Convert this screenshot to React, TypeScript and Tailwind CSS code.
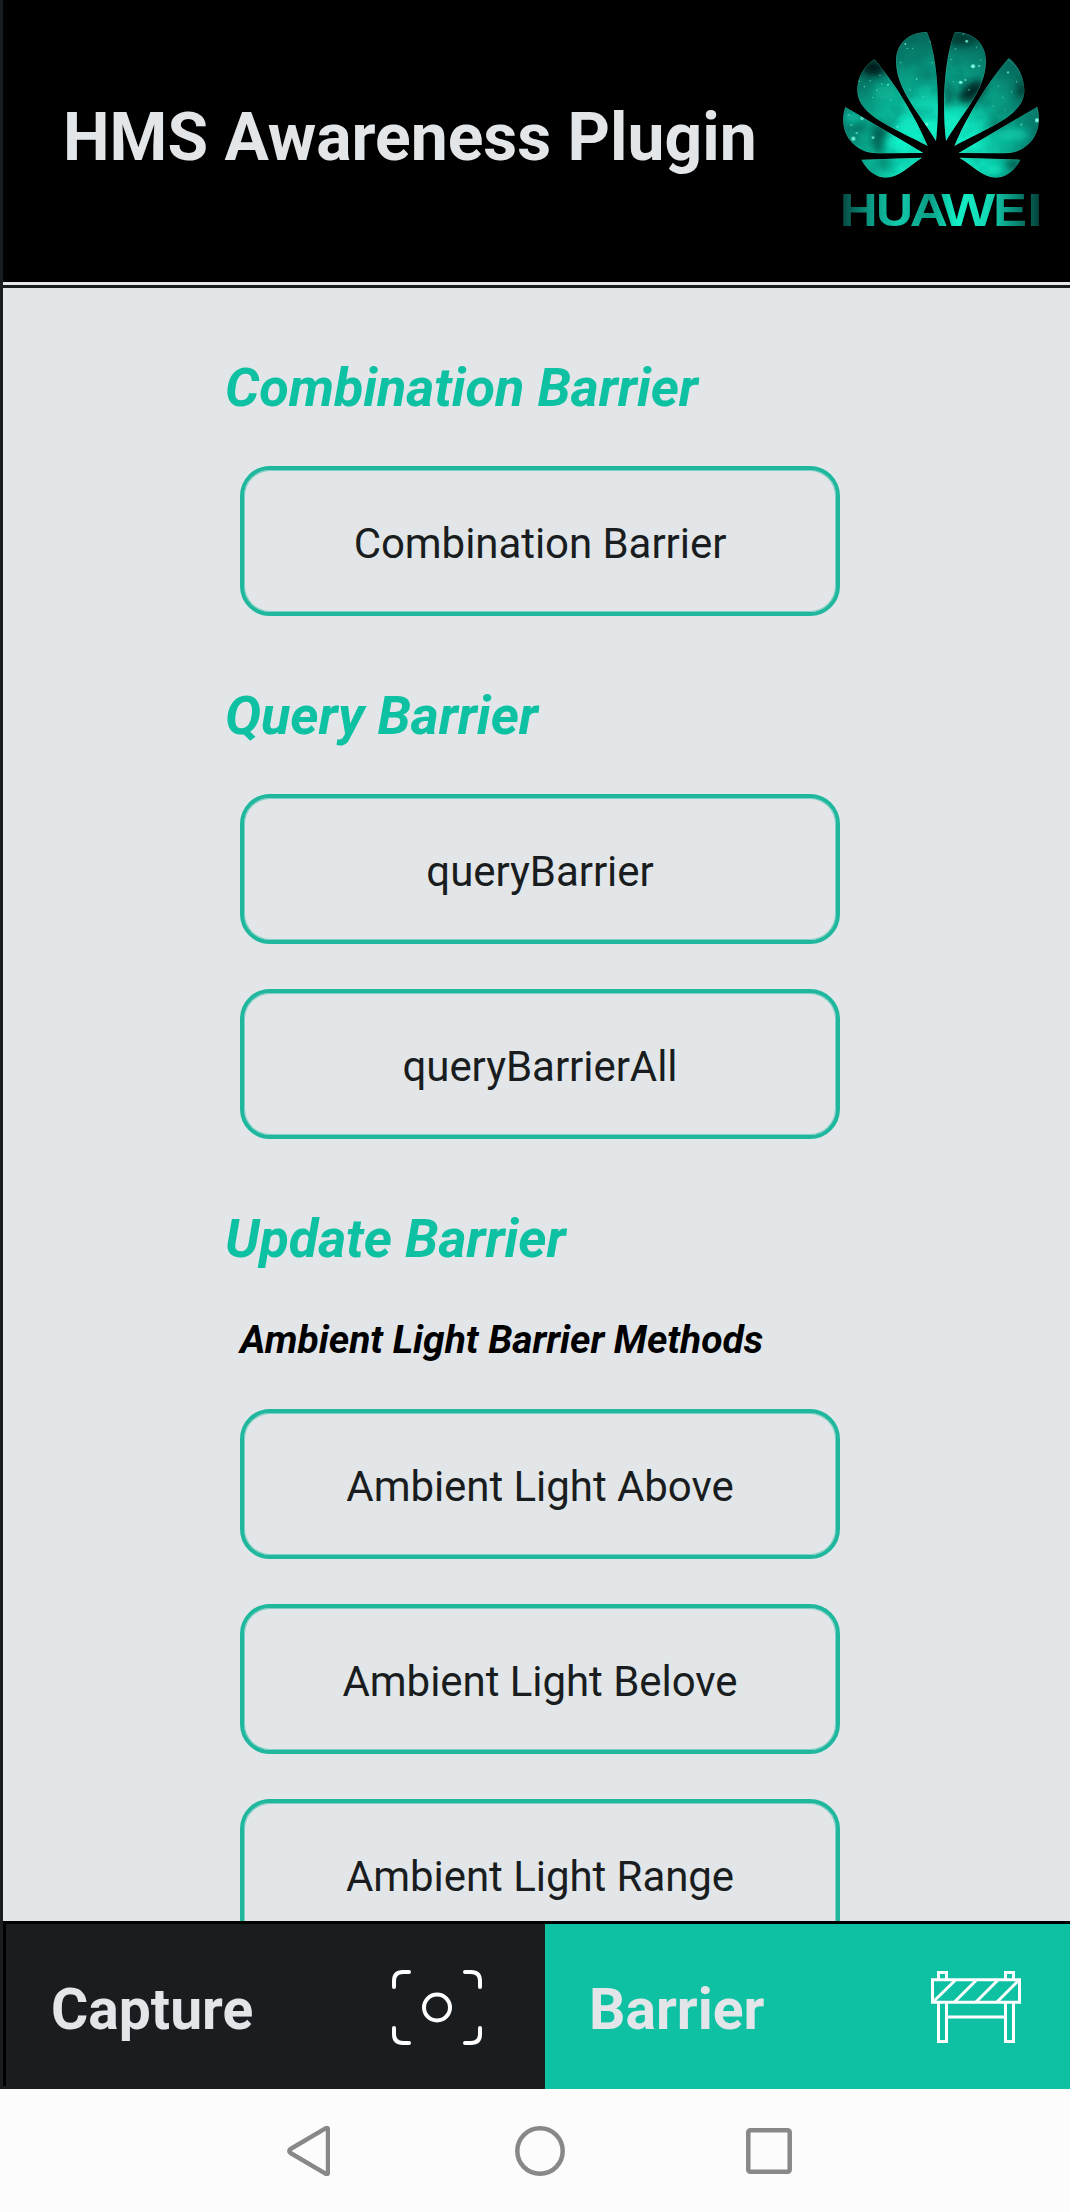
import React from "react";

const STARS: [number, number, number, number][] = [
  [459, 169, 6, 1], [422, 217, 5, 1], [477, 168, 3, 0.9], [440, 94, 4, 0.9], [436, 210, 3, 0.8],
  [100, 386, 6, 0.9], [126, 325, 5, 0.8], [320, 343, 5, 0.8], [159, 383, 4, 0.8], [110, 369, 3, 0.8],
  [651, 331, 6, 1], [564, 187, 3, 0.9], [332, 94, 3, 0.9], [256, 102, 3, 0.7], [262, 115, 2, 0.7],
  [290, 207, 2.5, 0.8], [242, 158, 2, 0.7], [278, 115, 2, 0.6], [336, 158, 2, 0.7], [204, 224, 3, 0.8],
  [180, 196, 2, 0.7], [150, 212, 2, 0.7], [133, 230, 2, 0.8], [118, 214, 2, 0.7], [170, 240, 2, 0.6],
  [158, 262, 2, 0.6], [232, 350, 3, 0.7], [406, 117, 2, 0.8], [393, 148, 2, 0.7], [470, 112, 2, 0.6],
  [482, 150, 2, 0.7], [447, 240, 2, 0.8], [470, 262, 2, 0.7], [400, 215, 2, 0.6], [535, 228, 2, 0.7],
  [548, 262, 2, 0.7], [590, 215, 2, 0.7], [575, 245, 2, 0.6], [520, 288, 2, 0.7], [556, 300, 2, 0.6],
  [604, 343, 3, 0.6], [546, 343, 3, 0.6], [86, 315, 2.5, 0.8], [94, 345, 2.5, 0.8], [310, 260, 2, 0.6],
  [270, 240, 2, 0.6], [430, 72, 2, 0.7], [212, 270, 2, 0.6], [185, 222, 2, 0.7],
];

function HuaweiLogo() {
  const petals = (
    <>
      <path d="M348 393C361 280 352 135 321 66C272 66 229 95 228 152C228 240 300 310 348 393Z" />
      <path d="M323 408C285 318 222 215 163 148C126 172 110 210 112 246C118 318 215 350 323 408Z" />
      <path d="M309 428L76 291C62 332 71 372 97 399C125 427 150 430 185 430L309 429Z" />
      <path d="M306 443L124 449C141 481 167 503 200 503C237 502 270 466 306 443Z" />
    </>
  );
  return (
    <svg viewBox="0 0 750 816" className="h-[272px] w-[250px] shrink-0" role="img" aria-label="Huawei">
      <defs>
        <clipPath id="petals">
          <path d="M348 393C361 280 352 135 321 66C272 66 229 95 228 152C228 240 300 310 348 393Z" />
          <path d="M323 408C285 318 222 215 163 148C126 172 110 210 112 246C118 318 215 350 323 408Z" />
          <path d="M309 428L76 291C62 332 71 372 97 399C125 427 150 430 185 430L309 429Z" />
          <path d="M306 443L124 449C141 481 167 503 200 503C237 502 270 466 306 443Z" />
          <path d="M378 393C365 280 374 135 405 66C454 66 497 95 498 152C498 240 426 310 378 393Z" />
          <path d="M403 408C441 318 504 215 567 143C600 172 614 210 613 246C608 318 511 350 403 408Z" />
          <path d="M417 428L652 290C663 332 655 372 629 399C601 427 576 430 541 430L417 429Z" />
          <path d="M418 443L601 449C585 481 559 503 526 503C489 502 456 466 418 443Z" />
        </clipPath>
        <radialGradient id="nebula" gradientUnits="userSpaceOnUse" cx="350" cy="430" r="390">
          <stop offset="0" stopColor="#10f8cf" />
          <stop offset="0.3" stopColor="#10e8c1" />
          <stop offset="0.5" stopColor="#0ab597" />
          <stop offset="0.75" stopColor="#088774" />
          <stop offset="1" stopColor="#055e53" />
        </radialGradient>
        <linearGradient id="word" gradientUnits="userSpaceOnUse" x1="70" y1="0" x2="657" y2="0">
          <stop offset="0" stopColor="#064c44" />
          <stop offset="0.14" stopColor="#0a9a84" />
          <stop offset="0.28" stopColor="#13cbab" />
          <stop offset="0.44" stopColor="#0a9b84" />
          <stop offset="0.58" stopColor="#12f0c6" />
          <stop offset="0.74" stopColor="#14d8b5" />
          <stop offset="0.88" stopColor="#0a8876" />
          <stop offset="1" stopColor="#03443c" />
        </linearGradient>
        <filter id="soft" x="-50%" y="-50%" width="200%" height="200%">
          <feGaussianBlur stdDeviation="13" />
        </filter>
        <filter id="clouds" x="0" y="0" width="100%" height="100%">
          <feTurbulence type="fractalNoise" baseFrequency="0.012" numOctaves="4" seed="8" />
          <feColorMatrix values="0 0 0 0 0  0 0 0 0 0.12  0 0 0 0 0.1  2.6 0 0 0 -1.15" />
        </filter>
      </defs>
      <g clipPath="url(#petals)">
        <rect x="60" y="50" width="610" height="460" fill="url(#nebula)" />
        <rect x="60" y="50" width="610" height="460" filter="url(#clouds)" opacity="0.4" />
        <g filter="url(#soft)">
          <ellipse cx="160" cy="172" rx="40" ry="24" fill="#011512" />
          <ellipse cx="180" cy="385" rx="26" ry="45" fill="#034038" opacity="0.75" />
          <ellipse cx="115" cy="350" rx="28" ry="16" fill="#055a4e" opacity="0.7" />
          <ellipse cx="455" cy="245" rx="48" ry="24" fill="#011a17" opacity="0.9" transform="rotate(-35 455 245)" />
          <ellipse cx="425" cy="85" rx="50" ry="22" fill="#02352f" opacity="0.9" />
          <ellipse cx="385" cy="255" rx="12" ry="40" fill="#022b26" opacity="0.7" />
          <ellipse cx="605" cy="240" rx="15" ry="25" fill="#022b26" opacity="0.9" />
          <ellipse cx="540" cy="345" rx="30" ry="9" fill="#034b41" opacity="0.8" />
          <ellipse cx="580" cy="465" rx="24" ry="12" fill="#02352f" opacity="0.9" />
          <ellipse cx="195" cy="460" rx="16" ry="12" fill="#044d43" opacity="0.8" />
          <ellipse cx="580" cy="375" rx="50" ry="17" fill="#0ed6b1" opacity="0.8" />
          <ellipse cx="410" cy="345" rx="40" ry="28" fill="#10e9c1" opacity="0.7" />
          <ellipse cx="240" cy="400" rx="45" ry="22" fill="#10f2c9" opacity="0.9" />
          <ellipse cx="270" cy="345" rx="34" ry="18" fill="#10e6bf" opacity="0.8" />
          <ellipse cx="195" cy="250" rx="34" ry="22" fill="#0cb899" opacity="0.7" />
          <ellipse cx="98" cy="322" rx="26" ry="12" fill="#12d9b5" opacity="0.8" />
          <ellipse cx="520" cy="480" rx="30" ry="14" fill="#10f1c8" opacity="0.8" />
          <ellipse cx="255" cy="470" rx="30" ry="16" fill="#10f1c8" opacity="0.8" />
        </g>
        {STARS.map(([x, y, r, o]) => (
          <circle key={`${x}-${y}`} cx={x} cy={y} r={r} fill="#7dfbe3" opacity={o} />
        ))}
        <g fill="none" stroke="#8edccb" strokeOpacity="0.25" strokeWidth="3">
          {petals}
          <g transform="translate(726 0) scale(-1 1)">{petals}</g>
        </g>
      </g>
      <text y="648" fontFamily="Liberation Sans, sans-serif" fontWeight="700" fontSize="137" fill="url(#word)">
        <tspan x="59" textLength="114" lengthAdjust="spacingAndGlyphs">H</tspan>
        <tspan x="168" textLength="111" lengthAdjust="spacingAndGlyphs">U</tspan>
        <tspan x="269" textLength="115" lengthAdjust="spacingAndGlyphs">A</tspan>
        <tspan x="364" textLength="162" lengthAdjust="spacingAndGlyphs">W</tspan>
        <tspan x="520" textLength="101" lengthAdjust="spacingAndGlyphs">E</tspan>
        <tspan x="622" textLength="46" lengthAdjust="spacingAndGlyphs">I</tspan>
      </text>
    </svg>
  );
}

function CaptureIcon() {
  return (
    <svg viewBox="0 0 90 75" className="h-[75px] w-[90px]" fill="none" stroke="#fff" strokeWidth="4" strokeLinecap="round">
      <path d="M2 17V11Q2 2 11 2H17M73 2H79Q88 2 88 11V17M88 58V64Q88 73 79 73H73M17 73H11Q2 73 2 64V58" />
      <circle cx="45" cy="37.5" r="13" />
    </svg>
  );
}

function BarrierIcon() {
  return (
    <svg viewBox="0 0 90 73" className="h-[73px] w-[90px]" fill="none" stroke="#fff" strokeWidth="3">
      <path d="M1.5 8.8H88.5V31.2H1.5ZM7.5 8V1.5H15.5V8M74.5 8V1.5H82.5V8M7.5 32V70.5H15.5V32M74.5 32V70.5H82.5V32M15.5 46H74.5" />
      <path d="M2.5 30.5L24.5 9M23.5 31L45.5 9M45 31L67 9M66 31L88 9" />
    </svg>
  );
}

function Heading({ children }: { children: React.ReactNode }) {
  return (
    <h2 className="ml-[222px] flex h-[72px] items-center whitespace-nowrap pt-[2px] text-[54px] font-bold italic leading-[72px] tracking-[-0.1px] text-[#0ec1a3]">
      {children}
    </h2>
  );
}

function ActionButton({ children }: { children: React.ReactNode }) {
  return (
    <button className="flex h-[150px] w-[600px] shrink-0 items-center justify-center rounded-[30px] border-4 border-[#1fb89f] pt-1 text-[42px] tracking-[-0.05px] text-[#1a1d20] shadow-[inset_0_0_0_1px_#1fb89f80]">
      {children}
    </button>
  );
}

export default function App() {
  return (
    <div className="flex h-[2212px] w-[1070px] flex-col overflow-hidden bg-[#1a1d20] font-['Roboto',sans-serif]">
      <div className="flex h-[2089px] flex-col pl-[3px]">
        <header className="flex h-[285px] shrink-0 items-start justify-between border-b-[3px] border-[#e8e6ea] bg-black pt-[10px]">
          <h1 className="ml-[60px] mt-[88px] whitespace-nowrap text-[66px] font-bold leading-[80px] text-[#e2e6e9]">
            HMS Awareness Plugin
          </h1>
          <HuaweiLogo />
        </header>

        <main className="mt-[3px] flex h-[1633px] shrink-0 flex-col overflow-hidden bg-[#e2e6e9]">
          <div className="flex flex-col pt-[63px]">
            <Heading>Combination Barrier</Heading>
            <div className="ml-[237px] mt-[43px] flex flex-col">
              <ActionButton>Combination Barrier</ActionButton>
            </div>
            <div className="mt-[63px]">
              <Heading>Query Barrier</Heading>
            </div>
            <div className="ml-[237px] mt-[43px] flex flex-col gap-[45px]">
              <ActionButton>queryBarrier</ActionButton>
              <ActionButton>queryBarrierAll</ActionButton>
            </div>
            <div className="mt-[63px]">
              <Heading>Update Barrier</Heading>
            </div>
            <h3 className="ml-[237px] mt-[40px] h-[52px] whitespace-nowrap text-[39px] font-bold italic leading-[52px] tracking-[-0.03px] text-black">
              Ambient Light Barrier Methods
            </h3>
            <div className="ml-[237px] mt-[43px] flex flex-col gap-[45px]">
              <ActionButton>Ambient Light Above</ActionButton>
              <ActionButton>Ambient Light Belove</ActionButton>
              <ActionButton>Ambient Light Range</ActionButton>
            </div>
          </div>
        </main>

        <footer className="flex h-[168px] shrink-0 border-t-[3px] border-black">
          <div className="flex w-[542px] flex-col">
            <div className="flex h-[162px] items-center justify-between border-l-[3px] border-black pl-[45px] pr-[63px]">
              <span className="mt-[10px] text-[57px] font-bold text-[#e2e6e9]">Capture</span>
              <div className="pt-[4px]">
                <CaptureIcon />
              </div>
            </div>
          </div>
          <div className="flex flex-1 items-center justify-between bg-[#0ec1a3] pl-[44px] pr-[49px]">
            <span className="mt-[7px] text-[57px] font-bold text-[#e2e6e9]">Barrier</span>
            <div className="pt-[2px]">
              <BarrierIcon />
            </div>
          </div>
        </footer>
      </div>

      <nav className="flex h-[123px] shrink-0 items-center bg-[#fcfcfc] pl-[287px]">
        <svg viewBox="0 0 43 50" className="h-[50px] w-[43px]" fill="none" stroke="#888" strokeWidth="4.4" strokeLinejoin="round">
          <path d="M38.5 2.3Q41 1.2 41 4V46Q41 48.8 38.5 47.7L3.5 27Q1 25 3.5 23Z" />
        </svg>
        <svg viewBox="0 0 50 50" className="ml-[185px] h-[50px] w-[50px]" fill="none" stroke="#888" strokeWidth="4.5">
          <circle cx="25" cy="25" r="22.7" />
        </svg>
        <svg viewBox="0 0 46 46" className="ml-[181px] h-[46px] w-[46px]" fill="none" stroke="#888" strokeWidth="4.5">
          <rect x="2.3" y="2.3" width="41.4" height="41.4" rx="2" />
        </svg>
      </nav>
    </div>
  );
}
